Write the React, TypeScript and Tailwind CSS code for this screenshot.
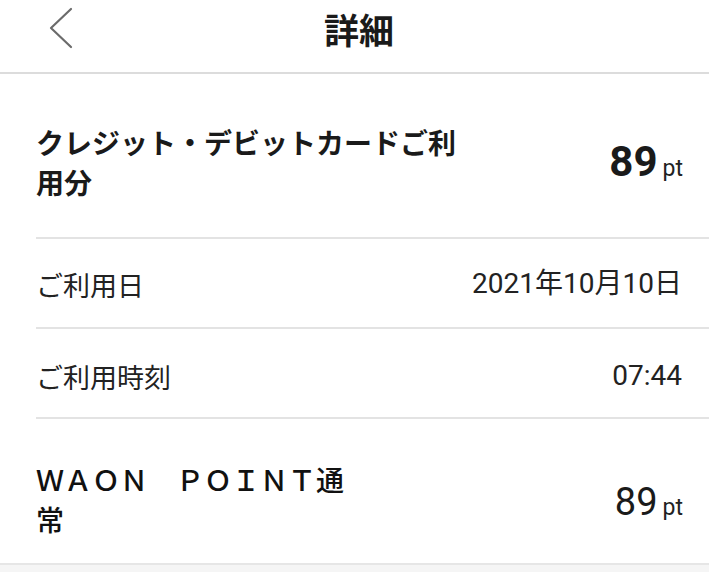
import React from "react";

const font = "font-['Roboto','Noto_Sans_CJK_JP',sans-serif]";

function Pt({ num, big }: { num: string; big?: boolean }) {
  return (
    <div className="flex items-baseline shrink-0">
      <span
        className={
          big
            ? "text-[42px] font-bold leading-none text-[#1a1a1a]"
            : "text-[38px] font-normal leading-none text-[#1a1a1a]"
        }
      >
        {num}
      </span>
      <span className="ml-[5px] text-[23px] leading-none text-[#222]">pt</span>
    </div>
  );
}

export default function App() {
  return (
    <div className={`w-[709px] h-[572px] bg-[#f5f5f5] ${font} text-[#222] overflow-hidden`}>
      <header className="relative h-[74px] bg-white border-b-2 border-[#dcdcdc] flex justify-center">
        <svg
          className="absolute left-[48px] top-[6px]"
          width="26"
          height="44"
          viewBox="0 0 26 44"
          fill="none"
        >
          <polyline
            points="23,3 3,22 23,41"
            stroke="#6b6b6b"
            strokeWidth="2.2"
            strokeLinecap="round"
            strokeLinejoin="round"
          />
        </svg>
        <h1 className="pt-[11px] pl-[9px] text-[35px] font-bold leading-none text-[#1a1a1a] font-['Noto_Sans_CJK_JP',sans-serif]">
          詳細
        </h1>
      </header>

      <main className="bg-white border-b-2 border-[#e6e6e6]">
        <div className="ml-9 h-[165px] border-b-2 border-[#e3e3e3] pt-[13px] pr-[26px] flex items-center justify-between">
          <div className="text-[28px] leading-[40px] font-bold text-[#1a1a1a] font-['Noto_Sans_CJK_JP',sans-serif]">
            クレジット・デビットカードご利
            <br />
            用分
          </div>
          <Pt num="89" big />
        </div>

        <div className="ml-9 h-[90px] border-b-2 border-[#e3e3e3] pt-[2px] pr-[27px] flex items-center justify-between">
          <div className="text-[27px] leading-none font-['Noto_Sans_CJK_JP',sans-serif]">ご利用日</div>
          <div className="text-[28px] leading-none">2021年10月10日</div>
        </div>

        <div className="ml-9 h-[90px] border-b-2 border-[#e3e3e3] pt-[6px] pr-[27px] flex items-center justify-between">
          <div className="text-[27px] leading-none font-['Noto_Sans_CJK_JP',sans-serif]">ご利用時刻</div>
          <div className="text-[28px] leading-none">07:44</div>
        </div>

        <div className="ml-9 h-[144px] pt-[15px] pr-[26px] flex items-center justify-between">
          <div className="text-[28px] leading-[40px] font-medium text-[#111] font-['Noto_Sans_CJK_JP',sans-serif]">
            ＷＡＯＮ　ＰＯＩＮＴ通
            <br />
            常
          </div>
          <div className="mt-[6px]">
            <Pt num="89" />
          </div>
        </div>
      </main>
    </div>
  );
}
